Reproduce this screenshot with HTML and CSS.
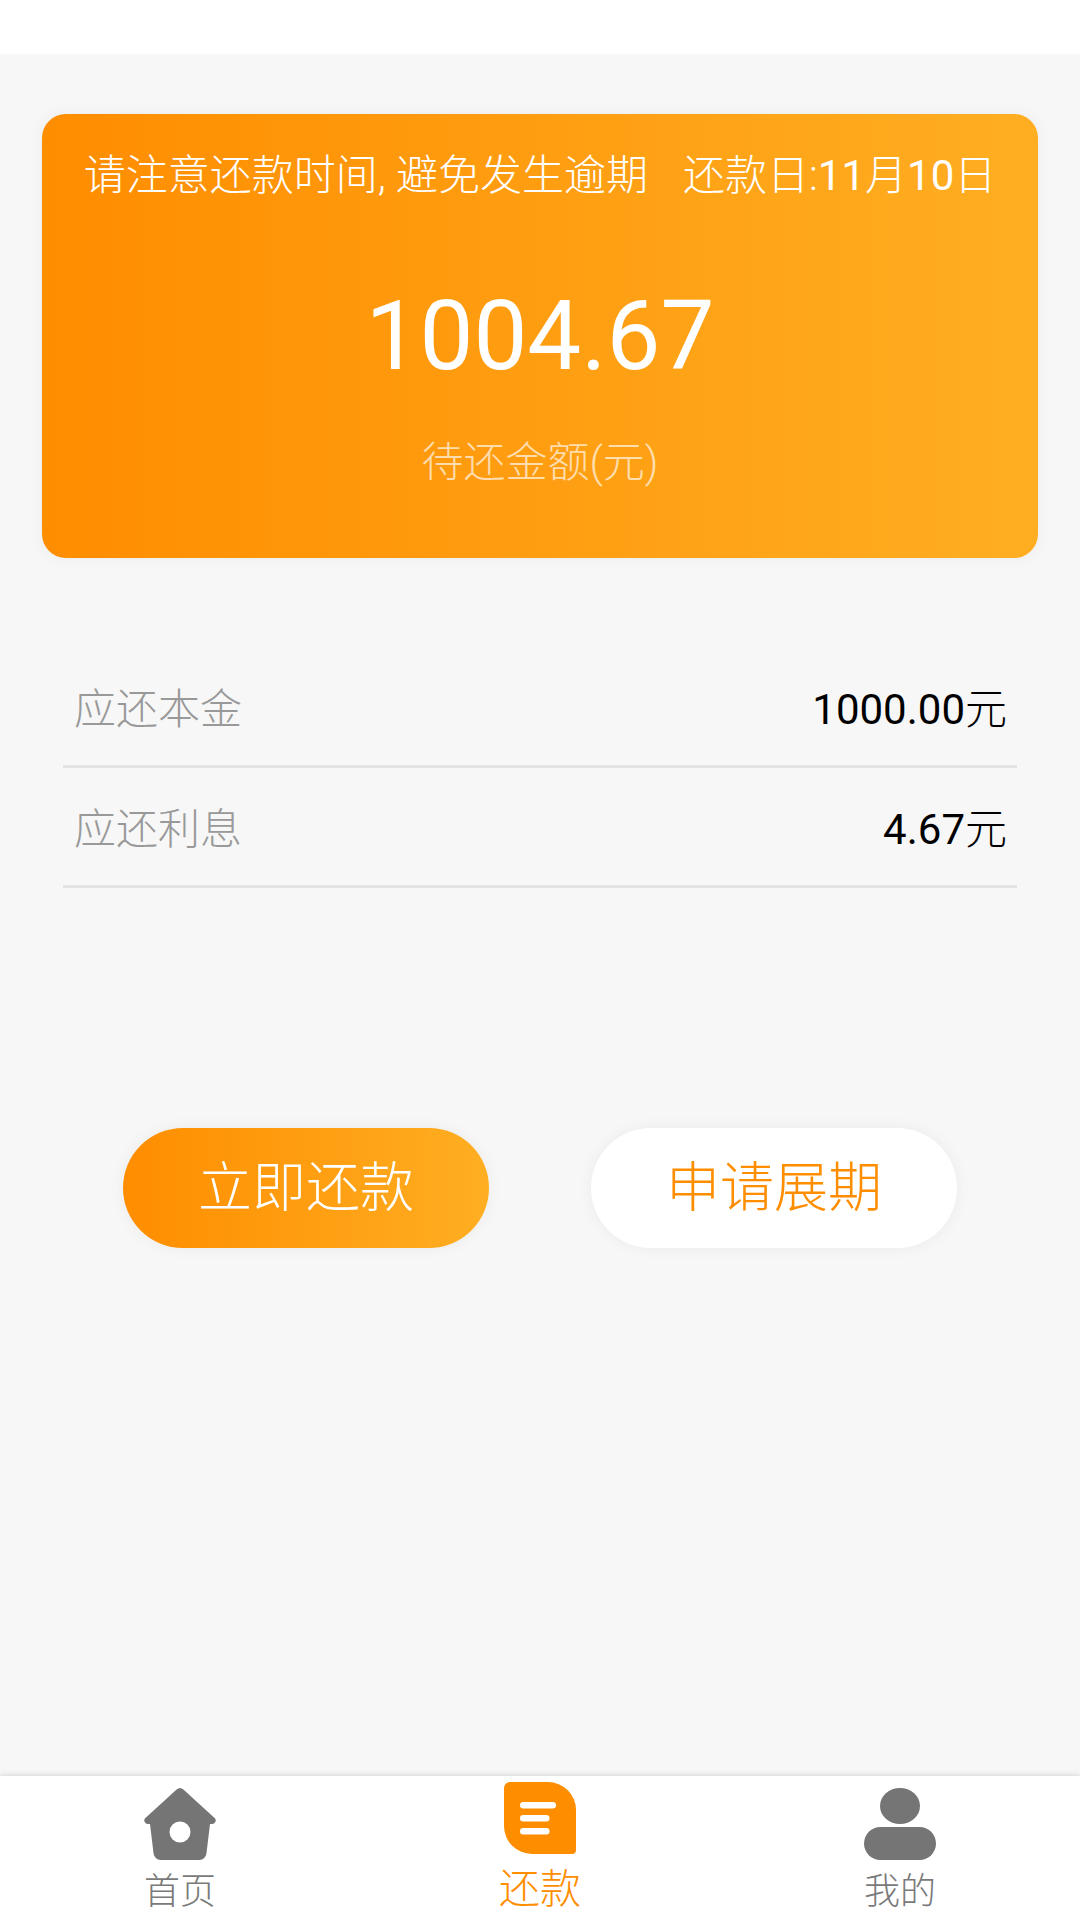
FILE: index.html
```html
<!DOCTYPE html>
<html lang="zh">
<head>
<meta charset="utf-8">
<title>还款</title>
<link rel="stylesheet" href="styles.css">
</head>
<body>
<div class="app">
  <div class="status"></div>
  <main class="content">
    <section class="card">
      <p class="notice"><span>请注意还款时间, 避免发生逾期</span><span>还款日:<span class="num">11</span>月<span class="num">10</span>日</span></p>
      <p class="amount num">1004.67</p>
      <p class="caption">待还金额(元)</p>
    </section>
    <section class="details">
      <div class="row"><span class="row-label">应还本金</span><span class="row-value"><span class="num">1000.00</span>元</span></div>
      <div class="row"><span class="row-label">应还利息</span><span class="row-value"><span class="num">4.67</span>元</span></div>
    </section>
    <div class="actions">
      <div class="btn btn-primary">立即还款</div>
      <div class="btn btn-plain">申请展期</div>
    </div>
  </main>
  <nav class="tabs">
    <div class="tab">
      <svg class="tab-icon" viewBox="0 0 72 72"><path fill-rule="evenodd" fill="#757575" d="M32.6 1.600a5 5 0 0 1 6.800 0L70.600 30a3.400 3.400 0 0 1-2 5.900l-2.600.2-3.400 28.200A7.500 7.500 0 0 1 55.200 72H16.800a7.500 7.500 0 0 1-7.400-7.700L6 36.100l-2.600-.2a3.400 3.400 0 0 1-2-5.900ZM36 33.500a10.500 10.500 0 1 0 0 21 10.500 10.500 0 0 0 0-21Z"/></svg>
      <span class="tab-label">首页</span>
    </div>
    <div class="tab tab-active">
      <svg class="tab-icon icon-up" viewBox="0 0 72 72"><path fill="#ff8d00" d="M6 0h38a28 28 0 0 1 28 28v40a4 4 0 0 1-4 4H28A28 28 0 0 1 0 44V6a6 6 0 0 1 6-6Z"/><g fill="#fff"><rect x="16" y="20" width="36" height="6.500" rx="3.250"/><rect x="16" y="33" width="29.500" height="6.500" rx="3.250"/><rect x="16" y="46" width="29.500" height="6.500" rx="3.250"/></g></svg>
      <span class="tab-label">还款</span>
    </div>
    <div class="tab">
      <svg class="tab-icon" viewBox="0 0 72 72"><ellipse cx="36" cy="18" rx="20" ry="18" fill="#757575"/><rect x="0" y="39" width="72" height="33" rx="16.500" fill="#757575"/></svg>
      <span class="tab-label">我的</span>
    </div>
  </nav>
</div>
</body>
</html>
```
FILE: styles.css
```css
* { box-sizing: border-box; }
html, body { margin: 0; padding: 0; }
body {
  width: 1080px;
  height: 1920px;
  font-family: "Roboto", "Noto Sans CJK SC", sans-serif;
  font-weight: 300;
  background: #f7f7f7;
  overflow: hidden;
}
p { margin: 0; }

/* Latin digits sit a little heavier than the light CJK text */
.num { font-weight: 400; }

.app { display: flex; flex-direction: column; height: 1920px; }
.status { height: 54px; background: #fff; flex: none; }
.content { flex: 1; padding: 60px 42px 0; }

.card {
  height: 444px;
  border-radius: 24px;
  background: linear-gradient(90deg, #ff8d00, #ffae22);
  box-shadow: 0 0 16px rgba(0, 0, 0, .05);
  color: #fff;
  display: flex;
  flex-direction: column;
  align-items: center;
  padding-top: 34px;
}
.notice {
  width: 100%;
  display: flex;
  justify-content: center;
  gap: 35px;
  font-size: 42px;
  line-height: 56px;
  white-space: nowrap;
}
.amount {
  margin-top: 72px;
  font-size: 96px;
  line-height: 120px;
}
.caption {
  margin-top: 39px;
  font-size: 42px;
  line-height: 56px;
  color: rgba(255, 255, 255, .66);
}

.details { margin: 90px 21px 0; }
.row {
  height: 120px;
  border-bottom: 3px solid #e4e4e4;
  display: flex;
  justify-content: space-between;
  align-items: center;
  padding: 0 10px 2px 11px;
  font-size: 42px;
}
.row-label { color: #999; }
.row-value { color: #000; }

.actions {
  margin-top: 240px;
  display: flex;
  justify-content: center;
  gap: 102px;
}
.btn {
  width: 366px;
  height: 120px;
  border-radius: 60px;
  display: flex;
  align-items: center;
  justify-content: center;
  font-size: 54px;
  padding-bottom: 9px;
  box-shadow: 0 0 16px rgba(0, 0, 0, .05);
}
.btn-primary { background: linear-gradient(90deg, #ff8d00, #ffae22); color: #fff; }
.btn-plain { background: #fff; color: #ff8d00; }

.tabs {
  flex: none;
  height: 144px;
  background: #fff;
  box-shadow: 0 -1px 6px rgba(0, 0, 0, .14);
  display: grid;
  grid-template-columns: repeat(3, 360px);
}
.tab {
  display: flex;
  flex-direction: column;
  align-items: center;
  padding-top: 12px;
  color: #7a7a7a;
}
.tab-active { color: #ff8d00; }
.tab-icon { width: 72px; height: 72px; display: block; }
.icon-up { margin-top: -6px; }
.tab-label { font-size: 36px; line-height: 50px; margin-top: 7px; }
.tab-active .tab-label { font-size: 41px; margin-top: 10px; }
```
